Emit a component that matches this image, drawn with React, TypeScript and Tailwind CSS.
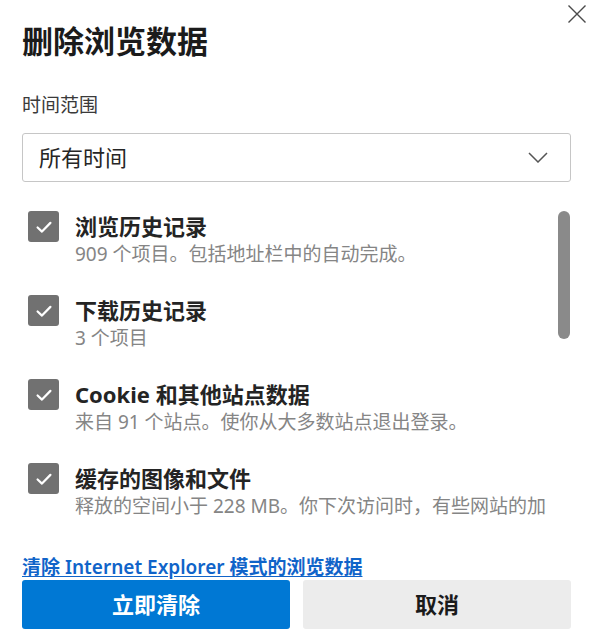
import React from "react";

const items = [
  { title: "浏览历史记录", sub: "909 个项目。包括地址栏中的自动完成。" },
  { title: "下载历史记录", sub: "3 个项目" },
  { title: "Cookie 和其他站点数据", sub: "来自 91 个站点。使你从大多数站点退出登录。" },
  { title: "缓存的图像和文件", sub: "释放的空间小于 228 MB。你下次访问时，有些网站的加载速度可能会变慢。" },
  { title: "密码", sub: "无" },
  { title: "自动填充表单数据(包括表单和卡)", sub: "无" },
];

function Check() {
  return (
    <div className="w-[31px] h-[31px] shrink-0 rounded-[3px] bg-[#717171] flex items-center justify-center">
      <svg width="22" height="22" viewBox="0 0 24 24" fill="none">
        <path d="M5 12.5 L9.8 17 L19 7.5" stroke="#ffffff" strokeWidth="2.4" strokeLinecap="round" strokeLinejoin="round" />
      </svg>
    </div>
  );
}

export default function App() {
  return (
    <div className="w-[595px] h-[644px] bg-white relative overflow-hidden font-['Noto_Sans','Noto_Sans_CJK_SC',sans-serif] pl-[22px] pr-[24px] pt-[20px]">
      <button className="absolute right-[8px] top-[4px] w-[20px] h-[20px] flex items-center justify-center">
        <svg width="20" height="20" viewBox="0 0 20 20" fill="none">
          <path d="M1.5 1.5 L18.5 18.5 M18.5 1.5 L1.5 18.5" stroke="#4a4a4a" strokeWidth="1.4" />
        </svg>
      </button>
      <h1 className="text-[31px] leading-[40px] font-bold text-[#1b1b1b] font-['Noto_Sans_CJK_SC',sans-serif]">删除浏览数据</h1>
      <div className="mt-[33px] text-[19px] leading-[24px] text-[#3a3a3a]">时间范围</div>
      <div className="mt-[16px] h-[49px] border border-[#c6c6c6] rounded-[3px] flex items-center justify-between pl-[16px] pr-[22px]">
        <span className="text-[22px] text-[#262626]">所有时间</span>
        <svg width="20" height="11" viewBox="0 0 20 11" fill="none">
          <path d="M1 1 L10 10 L19 1" stroke="#555555" strokeWidth="1.5" />
        </svg>
      </div>
      <div className="relative mt-[16px] h-[320px] overflow-hidden">
        <div className="flex flex-col gap-[27px] pt-[13px] pl-[6px] pr-[16px]">
          {items.map((it) => (
            <div key={it.title} className="flex items-start gap-[16px] h-[57px]">
              <Check />
              <div className="pt-[1px] flex flex-col">
                <div className="text-[22px] leading-[28px] font-bold text-[#242424]">{it.title}</div>
                <div className="mt-[2px] text-[19px] leading-[24px] text-[#858585]">{it.sub}</div>
              </div>
            </div>
          ))}
        </div>
        <div className="absolute right-[1px] top-[13px] w-[12px] h-[128px] rounded-full bg-[#8a8a8a]" />
      </div>
      <a className="block mt-[37px] text-[19px] leading-[24px] font-semibold text-[#1064c9] underline underline-offset-[2px] w-fit">
        清除 Internet Explorer 模式的浏览数据
      </a>
      <div className="flex gap-[13px] mt-[1px]">
        <button className="flex-1 h-[49px] rounded-[3px] bg-[#0078d4] text-white text-[22px] font-bold">立即清除</button>
        <button className="flex-1 h-[49px] rounded-[3px] bg-[#ececec] text-[#1b1b1b] text-[22px] font-bold">取消</button>
      </div>
    </div>
  );
}
